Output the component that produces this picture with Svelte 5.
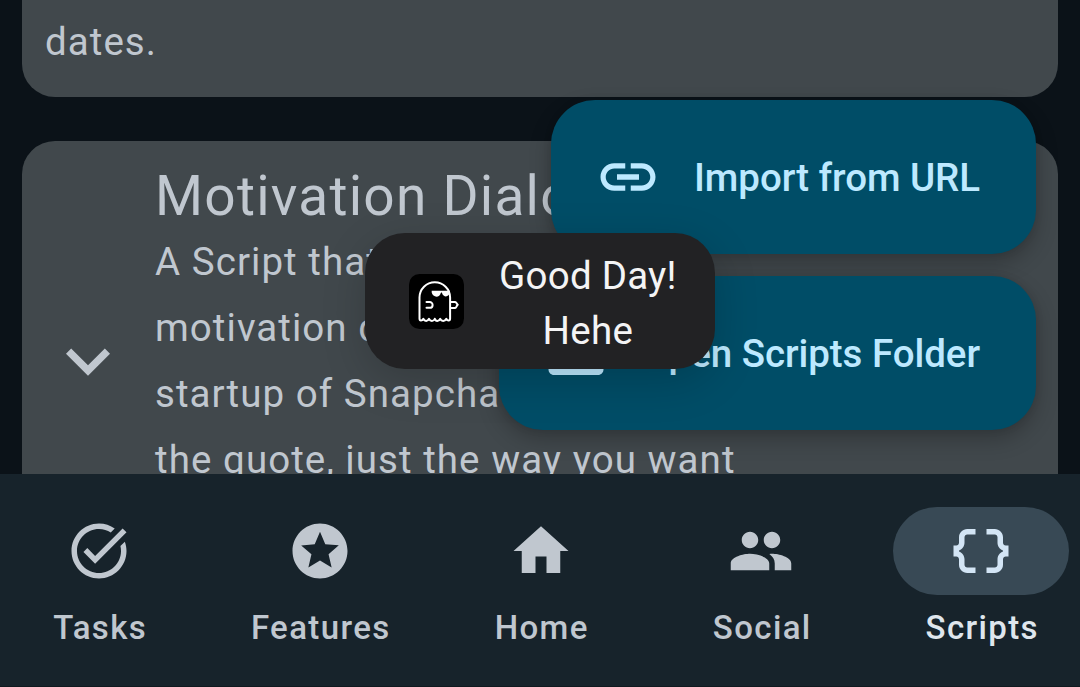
<script>
  const tabs = [
    { label: 'Tasks', path: 'M22 5.18L10.59 16.6l-4.24-4.24 1.41-1.41 2.83 2.83 10-10L22 5.18zM19.79 10.22C19.92 10.79 20 11.39 20 12c0 4.42-3.58 8-8 8s-8-3.58-8-8c0-4.42 3.58-8 8-8 1.58 0 3.04.46 4.28 1.25l1.44-1.44C16.1 2.67 14.13 2 12 2 6.48 2 2 6.48 2 12s4.48 10 10 10 10-4.48 10-10c0-1.19-.22-2.33-.6-3.39l-1.61 1.61z' },
    { label: 'Features', path: 'M11.99 2C6.47 2 2 6.48 2 12s4.47 10 9.99 10C17.52 22 22 17.52 22 12S17.52 2 11.99 2zm4.24 16L12 15.45 7.77 18l1.12-4.81-3.73-3.23 4.92-.42L12 5l1.92 4.53 4.92.42-3.73 3.23L16.23 18z' },
    { label: 'Home', path: 'M10 20v-6h4v6h5v-8h3L12 3 2 12h3v8z' },
    { label: 'Social', path: 'M16 11c1.66 0 2.99-1.34 2.99-3S17.66 5 16 5s-3 1.34-3 3 1.34 3 3 3zm-8 0c1.66 0 2.99-1.34 2.99-3S9.66 5 8 5 5 6.34 5 8s1.34 3 3 3zm0 2c-2.33 0-7 1.17-7 3.5V19h14v-2.5c0-2.33-4.67-3.5-7-3.5zm8 0c-.29 0-.62.02-.97.05 1.16.84 1.97 1.97 1.97 3.45V19h6v-2.5c0-2.33-4.67-3.5-7-3.5z' },
    { label: 'Scripts', active: true, path: 'M4 7v2c0 .55-.45 1-1 1H2v4h1c.55 0 1 .45 1 1v2c0 1.65 1.35 3 3 3h3v-2H7c-.55 0-1-.45-1-1v-2c0-1.3-.84-2.42-2-2.83v-.34C5.16 11.42 6 10.3 6 9V7c0-.55.45-1 1-1h3V4H7C5.35 4 4 5.35 4 7zM21 10c-.55 0-1-.45-1-1V7c0-1.65-1.35-3-3-3h-3v2h3c.55 0 1 .45 1 1v2c0 1.3.84 2.42 2 2.83v.34c-1.16.41-2 1.52-2 2.83v2c0 .55-.45 1-1 1h-3v2h3c1.65 0 3-1.35 3-3v-2c0-.55.45-1 1-1h1v-4h-1z' }
  ];

  const actions = [
    { label: 'Import from URL', path: 'M3.9 12c0-1.71 1.39-3.1 3.1-3.1h4V7H7c-2.76 0-5 2.24-5 5s2.24 5 5 5h4v-1.9H7c-1.71 0-3.1-1.39-3.1-3.1zM8 13h8v-2H8v2zm9-6h-4v1.9h4c1.71 0 3.1 1.39 3.1 3.1s-1.39 3.1-3.1 3.1h-4V17h4c2.76 0 5-2.24 5-5s-2.24-5-5-5z' },
    { label: 'Open Scripts Folder', path: 'M10 4H4c-1.1 0-1.99.9-1.99 2L2 18c0 1.1.9 2 2 2h16c1.1 0 2-.9 2-2V8c0-1.1-.9-2-2-2h-8l-2-2z' }
  ];
</script>

<div class="screen">
  <main>
    <section class="card first"><p>dates.</p></section>
    <section class="card second">
      <svg class="chevron" viewBox="0 0 24 24"><path d="M7.41 8.59L12 13.17l4.59-4.58L18 10l-6 6-6-6z" /></svg>
      <div class="info">
        <h2>Motivation Dialog</h2>
        <p>A Script that shows a<br />motivation dialog on the<br />startup of Snapchat with<br />the quote, just the way you want</p>
      </div>
    </section>
  </main>

  <nav>
    {#each tabs as tab}
      <div class="tab" class:active={tab.active}>
        <div class="pill"><svg class="icon" viewBox="0 0 24 24"><path d={tab.path} /></svg></div>
        <span>{tab.label}</span>
      </div>
    {/each}
  </nav>

  <div class="actions">
    {#each actions as action}
      <button>
        <svg class="icon" viewBox="0 0 24 24"><path d={action.path} /></svg>
        <span>{action.label}</span>
      </button>
    {/each}
  </div>

  <div class="toast">
    <svg class="ghost" viewBox="0 0 55 55">
      <rect width="55" height="55" rx="10.5" fill="#000" />
      <g fill="none" stroke="#fff" stroke-width="2" stroke-linecap="round" stroke-linejoin="round">
        <path d="M10.5 44.5V23.5a15.3 15.3 0 0 1 30.6 0v21c0 2.6-2.6 2.8-3.8.3-1.5 2.8-4.7 2.8-6.2 0-1 2.8-4.6 2.8-5.3 0-1.3 2.8-4.4 2.8-5.9 0-1.2 2.8-4.2 2.8-5.6 0-1.3 2.5-3.8 2.3-3.8-.3z" />
        <path d="M17.5 28h3.2a2.9 2.9 0 0 1 0 5.8h-3.2" />
        <path d="M42 28h4.2c1.2 0 1.3 1.7 2.6 2.7-1.3.9-1.5 3.4-2.6 3.4H42" />
      </g>
      <path d="M22.7 16.8h18.2v1.8c-.6 4.4-6.3 5.4-7.8.7l-.5-1-.8.8c-1 5.1-8.1 4.7-9.1-.5z" fill="#fff" />
    </svg>
    <span>Good Day!<br />Hehe</span>
  </div>
</div>

<style>
  :global(body) { margin: 0; background: #0b1218; }
  .screen {
    position: relative;
    display: flex;
    flex-direction: column;
    width: 1080px;
    height: 687px;
    overflow: hidden;
    background: #0b1218;
    color: #c0c7cf;
    font-family: Roboto, sans-serif;
    font-size: 38.5px;
    letter-spacing: 1.05px;
  }
  main {
    display: flex;
    flex-direction: column;
    gap: 44px;
    height: 474px;
    padding: 0 22px;
    overflow: hidden;
  }
  h2, p { margin: 0; font-weight: 400; white-space: nowrap; }
  p { line-height: 66px; }
  h2 { font-size: 55px; line-height: 66px; letter-spacing: 1.25px; }
  .card { flex: none; box-sizing: border-box; background: #41484c; }
  .first { height: 97px; padding: 9px 23px; border-radius: 0 0 33px 33px; }
  .second {
    display: flex;
    align-items: center;
    gap: 23px;
    height: 440px;
    padding: 0 22px;
    border-radius: 33px;
  }
  .chevron { flex: none; width: 88px; height: 88px; fill: currentColor; }
  .info { align-self: flex-start; padding-top: 22px; }
  .icon { display: block; flex: none; width: 66px; height: 66px; fill: currentColor; }
  nav {
    display: grid;
    grid-template-columns: 198fr 199fr 199fr 198fr 198fr;
    gap: 22px;
    height: 213px;
    box-sizing: border-box;
    padding-top: 33px;
    background: #17232b;
    border-bottom: 1px solid #10191f;
  }
  .tab {
    display: flex;
    flex-direction: column;
    align-items: center;
    gap: 11px;
    font-size: 33px;
    font-weight: 500;
    line-height: 44px;
    letter-spacing: 1.375px;
  }
  .tab span { padding-left: 2.5px; }
  .pill {
    display: flex;
    align-items: center;
    justify-content: center;
    width: 176px;
    height: 88px;
    border-radius: 44px;
  }
  .active { color: #dfe6ed; }
  .active .pill { background: #384955; color: #d3e5f5; }
  .actions {
    position: absolute;
    right: 44.5px;
    bottom: 257px;
    display: flex;
    flex-direction: column;
    align-items: flex-end;
    gap: 22px;
  }
  button {
    display: flex;
    align-items: center;
    gap: 33px;
    height: 154px;
    padding: 0 55.5px 0 44px;
    border: 0;
    border-radius: 44px;
    background: #004d67;
    color: #bde9ff;
    font: 500 38.5px Roboto, sans-serif;
    letter-spacing: -0.05px;
    white-space: nowrap;
    box-shadow: 0 9px 22px rgba(0, 0, 0, 0.24), 0 0 8px rgba(0, 0, 0, 0.08);
  }
  .toast {
    position: absolute;
    left: 365px;
    top: 233px;
    display: flex;
    align-items: center;
    gap: 35px;
    box-sizing: border-box;
    width: 350px;
    height: 136px;
    padding-left: 44px;
    border-radius: 40px;
    background: #222224;
    color: #f4f4f5;
    letter-spacing: 0.25px;
    line-height: 55px;
    text-align: center;
    box-shadow: 0 12px 44px rgba(0, 0, 0, 0.18);
  }
  .toast span { padding-top: 4px; }
  .ghost { width: 55px; height: 55px; }
</style>
